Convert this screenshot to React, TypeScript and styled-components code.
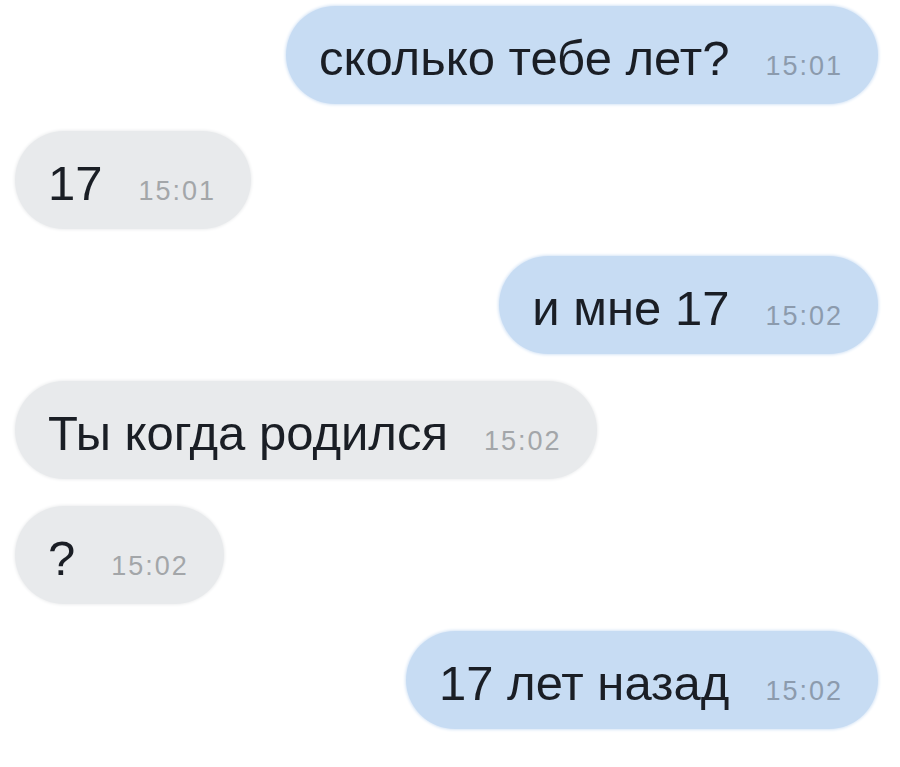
import styled, { createGlobalStyle } from 'styled-components'

const GlobalStyle = createGlobalStyle`
  html, body {
    margin: 0;
    padding: 0;
    background: #fff;
  }
  body {
    font-family: 'Liberation Sans', Arial, sans-serif;
  }
`

type Side = 'out' | 'in'

type Message = {
  side: Side
  text: string
  time: string
}

const messages: Message[] = [
  { side: 'out', text: 'сколько тебе лет?', time: '15:01' },
  { side: 'in', text: '17', time: '15:01' },
  { side: 'out', text: 'и мне 17', time: '15:02' },
  { side: 'in', text: 'Ты когда родился', time: '15:02' },
  { side: 'in', text: '?', time: '15:02' },
  { side: 'out', text: '17 лет назад', time: '15:02' },
]

export default function App() {
  return (
    <>
      <GlobalStyle />
      <Chat>
        {messages.map((m, i) => (
          <Row key={i} $side={m.side}>
            <Bubble $side={m.side}>
              <Text>{m.text}</Text>
              <Time $side={m.side}>{m.time}</Time>
            </Bubble>
          </Row>
        ))}
      </Chat>
    </>
  )
}

const Chat = styled.div`
  width: 900px;
  height: 767px;
  box-sizing: border-box;
  padding: 6px 22px 0 15px;
  display: flex;
  flex-direction: column;
  gap: 27px;
  background: #fff;
  overflow: hidden;
`

const Row = styled.div<{ $side: Side }>`
  display: flex;
  justify-content: ${(p) => (p.$side === 'out' ? 'flex-end' : 'flex-start')};
`

const Bubble = styled.div<{ $side: Side }>`
  height: 98px;
  box-sizing: border-box;
  padding: 7px 35px 0 33px;
  border-radius: 49px;
  display: flex;
  align-items: baseline;
  gap: 36px;
  line-height: 90px;
  background-color: ${(p) => (p.$side === 'out' ? '#c7dcf3' : '#e8eaec')};
  box-shadow: 0 0 3px 1px ${(p) => (p.$side === 'out' ? '#d6e5f6' : '#eeeff0')};
`

const Text = styled.span`
  font-size: 49px;
  color: #1a1e25;
  white-space: nowrap;
`

const Time = styled.span<{ $side: Side }>`
  font-size: 27px;
  letter-spacing: 2px;
  color: ${(p) => (p.$side === 'out' ? '#8c9bad' : '#a3a6a9')};
  white-space: nowrap;
`
